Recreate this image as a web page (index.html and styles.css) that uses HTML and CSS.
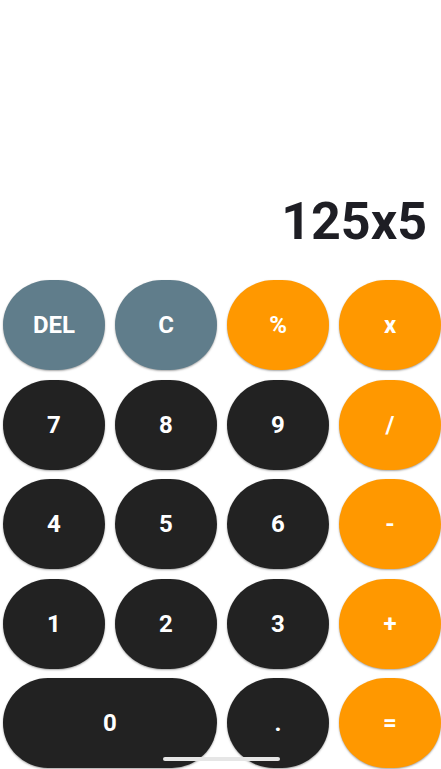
FILE: index.html
```html
<!DOCTYPE html>
<html>
<head>
<meta charset="utf-8">
<link rel="stylesheet" href="styles.css">
</head>
<body>
<div class="app">
  <div class="display"><span class="expr">125x5</span></div>
  <div class="keypad">
    <button class="key fn">DEL</button>
    <button class="key fn">C</button>
    <button class="key op">%</button>
    <button class="key op">x</button>
    <button class="key num">7</button>
    <button class="key num">8</button>
    <button class="key num">9</button>
    <button class="key op">/</button>
    <button class="key num">4</button>
    <button class="key num">5</button>
    <button class="key num">6</button>
    <button class="key op">-</button>
    <button class="key num">1</button>
    <button class="key num">2</button>
    <button class="key num">3</button>
    <button class="key op">+</button>
    <button class="key num wide">0</button>
    <button class="key num">.</button>
    <button class="key op">=</button>
  </div>
  <div class="navbar"></div>
</div>
</body>
</html>
```
FILE: styles.css
```css
html, body {
  margin: 0;
  padding: 0;
  background: #ffffff;
}
.app {
  position: relative;
  width: 441px;
  height: 769px;
  overflow: hidden;
  font-family: Roboto, "Liberation Sans", sans-serif;
}
.display {
  height: 280px;
  box-sizing: border-box;
  display: flex;
  align-items: flex-end;
  justify-content: flex-end;
  padding: 0 14px 32px 0;
}
.expr {
  font-size: 52px;
  line-height: 52px;
  font-weight: 700;
  color: #1e1e24;
}
.keypad {
  display: grid;
  grid-template-columns: repeat(4, 102px);
  grid-auto-rows: 90px;
  column-gap: 10px;
  row-gap: 9.5px;
  padding-left: 3px;
}
.key {
  border: none;
  margin: 0;
  padding: 0;
  border-radius: 46% / 50%;
  font-family: Roboto, "Liberation Sans", sans-serif;
  font-size: 24px;
  font-weight: 700;
  color: #ffffff;
  box-shadow: 0 1px 2px rgba(0, 0, 0, 0.35);
}
.wide {
  grid-column: span 2;
  border-radius: 45px;
}
.fn { background: #607d8b; }
.op { background: #ff9800; }
.num { background: #222222; }
.navbar {
  position: absolute;
  left: 163px;
  top: 757px;
  width: 117px;
  height: 4px;
  border-radius: 2px;
  background: #e6e6e6;
}
```
